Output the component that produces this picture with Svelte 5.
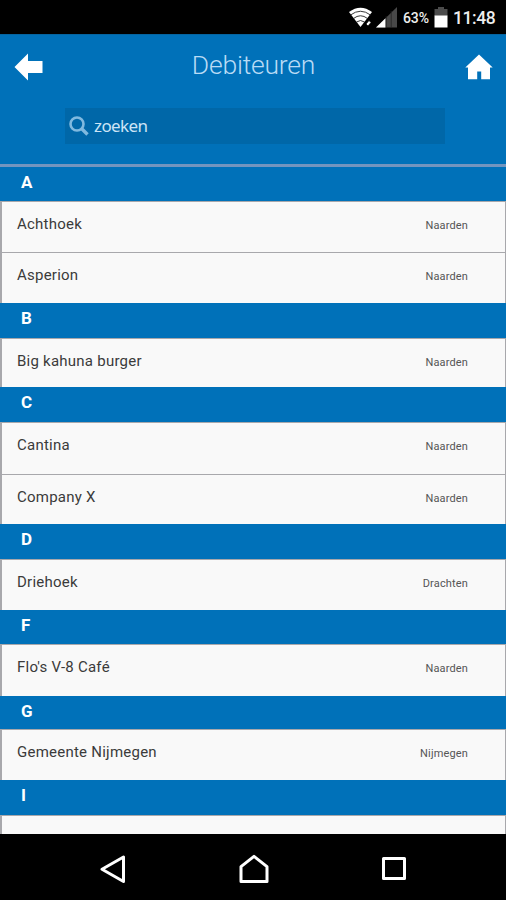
<script>
  const groups = [
    { letter: 'A', height: 34, rows: [
      { name: 'Achthoek', city: 'Naarden', height: 51 },
      { name: 'Asperion', city: 'Naarden', height: 51 }] },
    { letter: 'B', height: 35, rows: [{ name: 'Big kahuna burger', city: 'Naarden', height: 49 }] },
    { letter: 'C', height: 35, rows: [
      { name: 'Cantina', city: 'Naarden', height: 52 },
      { name: 'Company X', city: 'Naarden', height: 50 }] },
    { letter: 'D', height: 35, rows: [{ name: 'Driehoek', city: 'Drachten', height: 51 }] },
    { letter: 'F', height: 34, rows: [{ name: "Flo's V-8 Café", city: 'Naarden', height: 52 }] },
    { letter: 'G', height: 33, rows: [{ name: 'Gemeente Nijmegen', city: 'Nijmegen', height: 51 }] },
    { letter: 'I', height: 35, rows: [{ name: '', city: '', height: 51 }] }
  ];
</script>

<div class="screen">
  <div class="status">
    <svg class="wifi" width="26" height="22" viewBox="0 0 26 22">
      <path d="M1 5Q12.500-3.500 24 5L12.500 20Z" fill="#fff" />
      <path d="M2.500 8Q12.500 0.500 22.500 8M5.500 11.500Q12.500 6 19.500 11.500M8.500 15Q12.500 12 16.500 15" fill="none" stroke="#222" stroke-width=".9" />
      <path d="M18 17l3-3.500 2 2-3 3.500z" fill="#fff" stroke="#000" stroke-width=".7" />
    </svg>
    <svg class="signal" width="21" height="21" viewBox="0 0 21 21">
      <path d="M0 20.500L21 0V20.500Z" fill="#484848" />
      <path d="M0 20.500L9.500 11.300V20.500Z" fill="#fff" />
      <path d="M10.200 9v12M15.200 4v17" stroke="#222" stroke-width=".8" />
    </svg>
    <span class="percent">63%</span>
    <svg class="battery" width="14" height="21" viewBox="0 0 14 21">
      <path d="M4 0h6v2h3.500v7H.5V2H4z" fill="#4b4b4b" />
      <path d="M.5 8.500h13V20.500H.5z" fill="#fff" />
    </svg>
    <span class="time">11:48</span>
  </div>

  <header>
    <div class="titlebar">
      <svg class="back" width="30" height="28" viewBox="0 0 30 28">
        <path d="M.5 14L14 .5V8H28.500V20H14V27.500Z" fill="#fff" />
      </svg>
      <h1>Debiteuren</h1>
      <svg class="home" width="28" height="26" viewBox="0 0 28 26">
        <path d="M14 .4L27.700 13.500H25V25.300H16.200V17.500H12.200V25.300H3V13.500H.3Z" fill="#fff" />
      </svg>
    </div>
    <div class="search">
      <svg width="20" height="20" viewBox="0 0 20 20" fill="none" stroke="#80b9df">
        <circle cx="8" cy="8" r="6.500" stroke-width="2.600" />
        <path d="M12.500 12.500L18.500 18.500" stroke-width="3.400" />
      </svg>
      <span>zoeken</span>
    </div>
  </header>

  <main>
    {#each groups as group}
      <section>
        <h2 style:height="{group.height}px">{group.letter}</h2>
        {#each group.rows as row}
          <div class="row" style:height="{row.height}px">
            <span class="name">{row.name}</span>
            <span class="city">{row.city}</span>
          </div>
        {/each}
      </section>
    {/each}
  </main>

  <nav>
    <svg width="26" height="28" viewBox="0 0 26 28"><path d="M2 14.200L23.500 2V26.500Z" /></svg>
    <svg width="30" height="30" viewBox="0 0 30 30"><path d="M2 12.700L15 2.300L28 12.700V27.500H2Z" /></svg>
    <svg width="26" height="26" viewBox="0 0 26 26"><path d="M2.500 2.500H23.500V22.500H2.500Z" /></svg>
  </nav>
</div>

<style>
  .screen {
    width: 506px;
    height: 900px;
    display: flex;
    flex-direction: column;
    overflow: hidden;
    background: #000;
    font-family: Roboto, sans-serif;
  }
  .status {
    height: 34px;
    flex: none;
    display: flex;
    align-items: flex-start;
    padding-left: 348px;
    box-sizing: border-box;
    color: #eee;
    white-space: nowrap;
  }
  .status svg { flex: none; }
  .wifi { margin-top: 7px; }
  .signal { margin: 7px 0 0 2px; }
  .percent {
    width: 30px;
    margin: 9px 0 0 6px;
    font-size: 14px;
    line-height: 18px;
    font-weight: 500;
    letter-spacing: -.1px;
  }
  .battery { margin: 7px 0 0 1px; }
  .time {
    margin: 7px 0 0 5px;
    font-size: 17.500px;
    line-height: 22px;
    font-weight: 500;
    letter-spacing: -.4px;
  }
  header {
    height: 133px;
    flex: none;
    box-sizing: border-box;
    background: #0071b9;
    border-top: 1px solid #0564a0;
    border-bottom: 3px solid #7295bf;
  }
  .titlebar {
    height: 73px;
    display: flex;
    justify-content: space-between;
    align-items: flex-start;
    padding: 0 13px 0 14px;
  }
  .back { margin-top: 18px; }
  .home { margin-top: 19px; }
  h1 {
    margin: 13px 0 0;
    padding-right: 2px;
    font-size: 26.500px;
    line-height: 34px;
    font-weight: 300;
    letter-spacing: -.2px;
    color: #b9dbf5;
  }
  .search {
    width: 380px;
    height: 36px;
    box-sizing: border-box;
    margin-left: 65px;
    padding-left: 4px;
    display: flex;
    align-items: center;
    gap: 5px;
    background: #0067a8;
    color: #cce4f6;
    font: 17px/36px "Noto Sans", sans-serif;
    letter-spacing: -.6px;
  }
  main {
    height: 667px;
    flex: none;
    overflow: hidden;
  }
  h2 {
    margin: 0;
    padding-left: 21px;
    box-sizing: border-box;
    background: #0071b9;
    color: #fff;
    font-size: 17px;
    line-height: 30px;
    font-weight: 700;
  }
  .row {
    box-sizing: border-box;
    display: flex;
    justify-content: space-between;
    align-items: flex-start;
    padding: 0 37px 0 15px;
    background: #f9f9f9;
    border: solid #a8a8ac;
    border-width: 1px 1px 0 2px;
    color: #3b3b3b;
  }
  .name {
    font-size: 15px;
    line-height: 45px;
    letter-spacing: .24px;
  }
  .city {
    font-size: 11px;
    line-height: 48px;
    letter-spacing: .15px;
    color: #555;
  }
  nav {
    height: 66px;
    flex: none;
    box-sizing: border-box;
    display: flex;
    justify-content: space-between;
    align-items: center;
    padding: 4px 99px 0 100px;
  }
  nav path {
    fill: none;
    stroke: #fff;
    stroke-width: 3;
    stroke-linejoin: round;
  }
</style>
